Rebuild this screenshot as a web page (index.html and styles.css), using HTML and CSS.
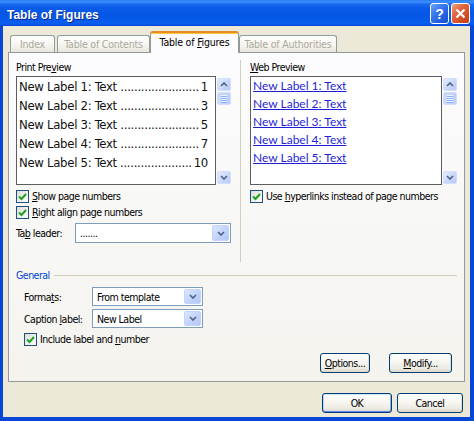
FILE: index.html
```html
<!DOCTYPE html>
<html>
<head>
<meta charset="utf-8">
<title>Table of Figures</title>
<link rel="stylesheet" href="styles.css">
</head>
<body>
<div class="window">
  <div class="titlebar">
    <span class="title">Table of Figures</span>
    <div class="title-buttons">
      <span class="tbtn help">?</span>
      <span class="tbtn close"><svg width="11" height="11" viewBox="0 0 11 11"><path d="M1.5 1.5L9.5 9.5M9.5 1.5L1.5 9.5" stroke="#fff" stroke-width="2.2" fill="none"/></svg></span>
    </div>
  </div>
  <div class="frame">
    <div class="client">
      <div class="tabs">
        <div class="tab t-index"><span>Index</span></div>
        <div class="tab t-toc"><span>Table of Contents</span></div>
        <div class="tab active t-fig"><span>Table of <u>F</u>igures</span></div>
        <div class="tab t-auth"><span>Table of Authorities</span></div>
      </div>
      <div class="panel">
        <div class="previews">
          <div class="col col-left">
            <div class="label">Print Pre<u>v</u>iew</div>
            <div class="preview-row">
              <div class="box print">
                <div class="entry"><span class="etext">New Label 1: Text</span><span class="dots">.......................</span><span class="num">1</span></div>
                <div class="entry"><span class="etext">New Label 2: Text</span><span class="dots">.......................</span><span class="num">3</span></div>
                <div class="entry"><span class="etext">New Label 3: Text</span><span class="dots">.......................</span><span class="num">5</span></div>
                <div class="entry"><span class="etext">New Label 4: Text</span><span class="dots">.......................</span><span class="num">7</span></div>
                <div class="entry"><span class="etext">New Label 5: Text</span><span class="dots">.....................</span><span class="num">10</span></div>
              </div>
              <div class="scrollbar">
                <span class="sbtn"><svg width="8" height="5" viewBox="0 0 8 5"><path d="M1 4L4 1L7 4" stroke="#4D6185" stroke-width="1.6" fill="none"/></svg></span>
                <span class="thumb"><i></i><i></i><i></i><i></i></span>
                <span class="track"></span>
                <span class="sbtn"><svg width="8" height="5" viewBox="0 0 8 5"><path d="M1 1L4 4L7 1" stroke="#4D6185" stroke-width="1.6" fill="none"/></svg></span>
              </div>
            </div>
            <div class="check first"><span class="cb"><svg width="9" height="9" viewBox="0 0 9 9"><path d="M1 4.5L3.5 7L8 2" stroke="#21A121" stroke-width="2" fill="none"/></svg></span><span><u>S</u>how page numbers</span></div>
            <div class="check"><span class="cb"><svg width="9" height="9" viewBox="0 0 9 9"><path d="M1 4.5L3.5 7L8 2" stroke="#21A121" stroke-width="2" fill="none"/></svg></span><span><u>R</u>ight align page numbers</span></div>
            <div class="leader-row">
              <span class="leader-label">Ta<u>b</u> leader:</span>
              <div class="select leader"><span class="value">.......</span><span class="arrow"><svg width="8" height="5" viewBox="0 0 8 5"><path d="M1 1L4 4L7 1" stroke="#4D6185" stroke-width="1.6" fill="none"/></svg></span></div>
            </div>
          </div>
          <div class="divider"></div>
          <div class="col col-right">
            <div class="label"><u>W</u>eb Preview</div>
            <div class="preview-row">
              <div class="box web">
                <div class="link"><span>New Label 1: Text</span></div>
                <div class="link"><span>New Label 2: Text</span></div>
                <div class="link"><span>New Label 3: Text</span></div>
                <div class="link"><span>New Label 4: Text</span></div>
                <div class="link"><span>New Label 5: Text</span></div>
              </div>
              <div class="scrollbar">
                <span class="sbtn"><svg width="8" height="5" viewBox="0 0 8 5"><path d="M1 4L4 1L7 4" stroke="#4D6185" stroke-width="1.6" fill="none"/></svg></span>
                <span class="thumb"><i></i><i></i><i></i><i></i></span>
                <span class="track"></span>
                <span class="sbtn"><svg width="8" height="5" viewBox="0 0 8 5"><path d="M1 1L4 4L7 1" stroke="#4D6185" stroke-width="1.6" fill="none"/></svg></span>
              </div>
            </div>
            <div class="check first"><span class="cb"><svg width="9" height="9" viewBox="0 0 9 9"><path d="M1 4.5L3.5 7L8 2" stroke="#21A121" stroke-width="2" fill="none"/></svg></span><span>Use <u>h</u>yperlinks instead of page numbers</span></div>
          </div>
        </div>
        <div class="general">
          <div class="legend"><span>General</span></div>
          <div class="field first">
            <span class="field-label">Forma<u>t</u>s:</span>
            <div class="select small"><span class="value">From template</span><span class="arrow"><svg width="8" height="5" viewBox="0 0 8 5"><path d="M1 1L4 4L7 1" stroke="#4D6185" stroke-width="1.6" fill="none"/></svg></span></div>
          </div>
          <div class="field">
            <span class="field-label">Caption <u>l</u>abel:</span>
            <div class="select small"><span class="value">New Label</span><span class="arrow"><svg width="8" height="5" viewBox="0 0 8 5"><path d="M1 1L4 4L7 1" stroke="#4D6185" stroke-width="1.6" fill="none"/></svg></span></div>
          </div>
          <div class="check field-check"><span class="cb"><svg width="9" height="9" viewBox="0 0 9 9"><path d="M1 4.5L3.5 7L8 2" stroke="#21A121" stroke-width="2" fill="none"/></svg></span><span>Include label and <u>n</u>umber</span></div>
        </div>
        <div class="panel-buttons">
          <button class="btn w-options"><u>O</u>ptions...</button>
          <button class="btn w-modify"><u>M</u>odify...</button>
        </div>
      </div>
      <div class="footer">
        <button class="btn default w-ok">OK</button>
        <button class="btn w-cancel">Cancel</button>
      </div>
    </div>
  </div>
</div>
</body>
</html>
```

FILE: styles.css
```css
* { box-sizing: border-box; }
html, body { margin: 0; padding: 0; }
body {
  width: 474px;
  height: 421px;
  overflow: hidden;
  background: #ffffff;
  font-family: "DejaVu Sans Condensed", "DejaVu Sans", sans-serif;
  font-size: 10.5px;
  letter-spacing: -0.5px;
  color: #000;
}
u { text-decoration: underline; text-underline-offset: 1px; }

.window {
  width: 474px;
  height: 421px;
  display: flex;
  flex-direction: column;
}

/* Title bar */
.titlebar {
  height: 26px;
  flex: none;
  display: flex;
  align-items: flex-start;
  padding-left: 7px;
  background: linear-gradient(to bottom, #2D7CF6 0, #3D8FFD 2px, #1C6AF0 4px, #0A5BE8 8px, #0556E4 14px, #0759EA 20px, #0A60F0 23px, #0548D8 26px);
}
.title {
  font-family: "Liberation Sans", sans-serif;
  font-weight: bold;
  font-size: 12px;
  letter-spacing: 0;
  line-height: 16px;
  margin-top: 7px;
  color: #fff;
  text-shadow: 1px 1px 0 #0B2A8C;
}
.title-buttons {
  margin-left: auto;
  display: flex;
  gap: 2px;
  padding: 3px 4px 0 0;
}
.tbtn {
  width: 19px;
  height: 21px;
  border: 1px solid #ffffff;
  border-radius: 3px;
  display: flex;
  align-items: center;
  justify-content: center;
}
.help {
  background: linear-gradient(135deg, #6FA3F8 0, #3C7BF0 35%, #1F5FE0 70%, #1A52D0 100%);
  color: #fff;
  font-family: "Liberation Sans", sans-serif;
  font-weight: bold;
  font-size: 14px;
  letter-spacing: 0;
}
.close {
  background: linear-gradient(135deg, #F0A184 0, #E2673F 35%, #D24E25 70%, #C03C15 100%);
}

/* Frame + client */
.frame {
  flex: 1;
  display: flex;
  background: #0847D6;
  padding: 0 4px 4px 3px;
}
.client {
  flex: 1;
  display: flex;
  flex-direction: column;
  background: #ECE9D8;
  padding: 5px 5px 4px 5px;
}

/* Tabs */
.tabs {
  display: flex;
  align-items: flex-end;
  height: 21px;
  padding-left: 2px;
  position: relative;
  z-index: 1;
}
.tab {
  height: 17px;
  border: 1px solid #919B9C;
  border-bottom: none;
  border-radius: 3px 3px 0 0;
  background: linear-gradient(#FFFFFF, #F6F5F1 55%, #E8E6DD);
  color: #ACA899;
  display: flex;
  align-items: center;
  justify-content: center;
  white-space: nowrap;
  letter-spacing: -0.2px;
}
.t-index { width: 45px; }
.t-toc { width: 93px; margin-left: 2px; }
.t-fig { width: 89px; }
.t-auth { width: 98px; }
.tab.active {
  height: 22px;
  margin-bottom: -1px;
  border-top: 2px solid #E68B2C;
  box-shadow: inset 0 1px 0 #FFC73C;
  background: #FCFCFE;
  color: #000;
  padding-bottom: 2px;
}

/* Panel */
.panel {
  height: 330px;
  flex: none;
  border: 1px solid #919B9C;
  background: linear-gradient(#FCFCFE, #F4F3EE);
  padding: 7px 7px 0 7px;
  display: flex;
  flex-direction: column;
}
.previews {
  display: flex;
  height: 202px;
}
.col-left { width: 216px; }
.col-right { width: 207px; }
.divider {
  width: 1px;
  margin: 0 9px 0 8px;
  background: #D0D0BF;
}
.label {
  height: 14px;
  line-height: 14px;
}
.preview-row {
  display: flex;
  align-items: flex-start;
  margin-top: 2px;
  height: 109px;
}
.box {
  height: 109px;
  border: 1px solid #5E5E5E;
  background: #fff;
  overflow: hidden;
}
.box.print {
  width: 200px;
  padding: 0 7px 0 2px;
  font-size: 13px;
  letter-spacing: -0.3px;
  line-height: 19px;
  color: #111;
}
.entry {
  display: flex;
  white-space: nowrap;
}
.dots { margin-left: auto; }
.num { margin-left: 2px; }

.box.web {
  width: 192px;
  padding: 0 0 0 2px;
  font-family: Lato, "Liberation Sans", sans-serif;
  font-size: 12px;
  letter-spacing: 0;
  line-height: 18px;
}
.link span {
  color: #1F1FD8;
  text-decoration: underline;
}

.scrollbar {
  width: 14px;
  height: 106px;
  margin-left: 1px;
  margin-top: 2px;
  display: flex;
  flex-direction: column;
}
.sbtn {
  height: 13px;
  border: 1px solid #D2DEFB;
  border-radius: 2px;
  background: linear-gradient(135deg, #E4ECFD, #C6D6FA 60%, #B7CAF6);
  display: flex;
  align-items: center;
  justify-content: center;
}
.thumb {
  height: 13px;
  margin-top: 1px;
  border: 1px solid #D2DEFB;
  border-radius: 2px;
  background: linear-gradient(90deg, #CCDBFC, #BCCFF8);
  display: flex;
  flex-direction: column;
  align-items: center;
  justify-content: center;
  gap: 1px;
}
.thumb i {
  display: block;
  width: 6px;
  height: 1px;
  background: #EEF4FE;
  box-shadow: 0 1px 0 #8CB0F8;
}
.track { flex: 1; }

/* Checkboxes */
.check {
  display: flex;
  align-items: center;
  height: 16px;
  gap: 3px;
  white-space: nowrap;
}
.check.first { margin-top: 3px; }
.cb {
  width: 13px;
  height: 13px;
  flex: none;
  border: 1px solid #1C5180;
  background: linear-gradient(135deg, #DCDCD7, #FFFFFF);
  display: flex;
  align-items: center;
  justify-content: center;
}

/* Selects */
.leader-row {
  display: flex;
  align-items: center;
  margin-top: 3px;
  height: 20px;
}
.leader-label { width: 59px; white-space: nowrap; }
.select {
  display: flex;
  border: 1px solid #7F9DB9;
  background: #fff;
  padding: 1px;
}
.select.leader { width: 156px; height: 20px; }
.select .value {
  flex: 1;
  padding-left: 3px;
  display: flex;
  align-items: center;
  white-space: nowrap;
}
.select .arrow {
  width: 17px;
  border: 1px solid #C3D3FD;
  border-radius: 2px;
  background: linear-gradient(135deg, #DDE7FE, #C1D3FB 55%, #B2C7F7);
  display: flex;
  align-items: center;
  justify-content: center;
}

/* General */
.general { margin-top: 6px; }
.legend {
  display: flex;
  align-items: center;
  height: 14px;
  color: #0046D5;
}
.legend::after {
  content: "";
  flex: 1;
  height: 1px;
  margin-left: 4px;
  background: #D0D0BF;
}
.field {
  display: flex;
  align-items: center;
  height: 19px;
  margin-left: 8px;
  margin-top: 3px;
}
.field.first { margin-top: 5px; }
.field-label { width: 68px; white-space: nowrap; }
.select.small { width: 111px; height: 19px; }
.field-check { margin-left: 8px; margin-top: 3px; }

/* Buttons */
.btn {
  height: 20px;
  padding: 0;
  border: 1px solid #003C74;
  border-radius: 3px;
  background: linear-gradient(#FFFFFF, #F7F6F2 45%, #ECEAE1 80%, #D9D4C8);
  font-family: inherit;
  font-size: 10.5px;
  letter-spacing: -0.5px;
  color: #000;
  box-shadow: inset -1px -1px 0 #E0DDD0;
}
.panel-buttons {
  display: flex;
  justify-content: flex-end;
  gap: 19px;
  margin-top: 6px;
  padding-right: 5px;
}
.w-options { width: 50px; }
.w-modify { width: 63px; }
.footer {
  display: flex;
  justify-content: flex-end;
  gap: 5px;
  margin-top: 11px;
  margin-right: 2px;
}
.w-ok { width: 70px; }
.w-cancel { width: 66px; }
.btn.default {
  box-shadow: inset 0 1px 0 #CEE7FF, inset 0 -1px 0 #6982EE, inset 1px 0 0 #BCD4F6, inset -1px 0 0 #89ADE4;
}
```
